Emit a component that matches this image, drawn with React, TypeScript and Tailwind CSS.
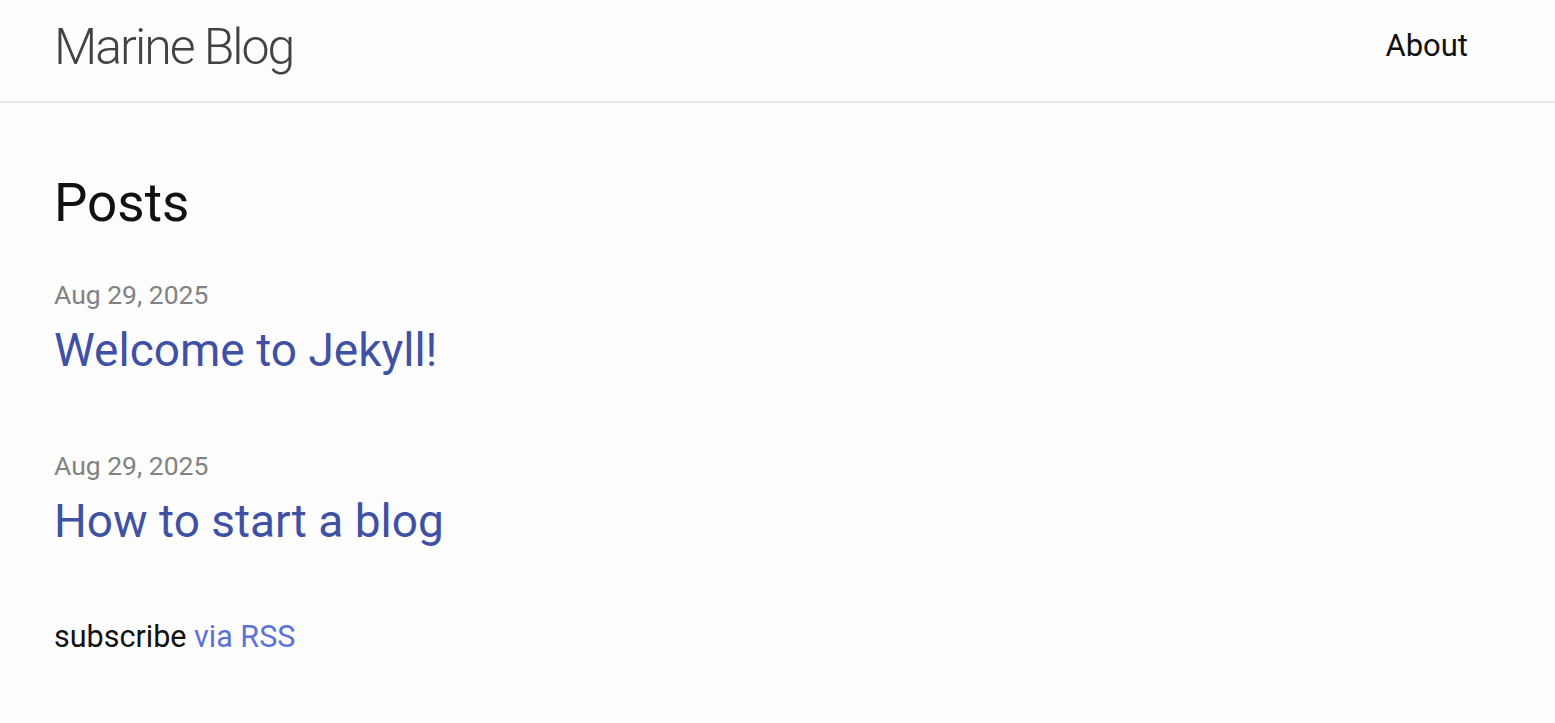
import React from "react";

const posts = [
  { date: "Aug 29, 2025", title: "Welcome to Jekyll!" },
  { date: "Aug 29, 2025", title: "How to start a blog" },
];

export default function App() {
  return (
    <div className="min-h-screen bg-[#fdfdfd] font-['Roboto',sans-serif] text-[#111]">
      <header className="h-[103px] border-b-2 border-[#e8e8e8] px-[54px] pt-[17px] flex items-start justify-between">
        <a className="text-[50px] leading-[60px] font-light text-[#424242] tracking-[-2px]">Marine Blog</a>
        <nav className="pr-[33px] mt-[11px]">
          <a className="text-[31px] leading-[36px] text-[#111]">About</a>
        </nav>
      </header>

      <main className="px-[54px]">
        <h1 className="mt-[69px] text-[53px] leading-[62px] text-[#111]">Posts</h1>
        <ul className="mt-[46px]">
          {posts.map((p, i) => (
            <li key={p.title} className={i > 0 ? "mt-[73px]" : ""}>
              <div className="text-[26.5px] leading-[30px] text-[#828282]">{p.date}</div>
              <a className="block mt-[13px] text-[46px] leading-[55px] text-[#3f51a5]">{p.title}</a>
            </li>
          ))}
        </ul>
        <p className="mt-[70px] text-[30.5px] leading-[36px]">
          subscribe <a className="text-[#5c72d6]">via RSS</a>
        </p>
      </main>
    </div>
  );
}
